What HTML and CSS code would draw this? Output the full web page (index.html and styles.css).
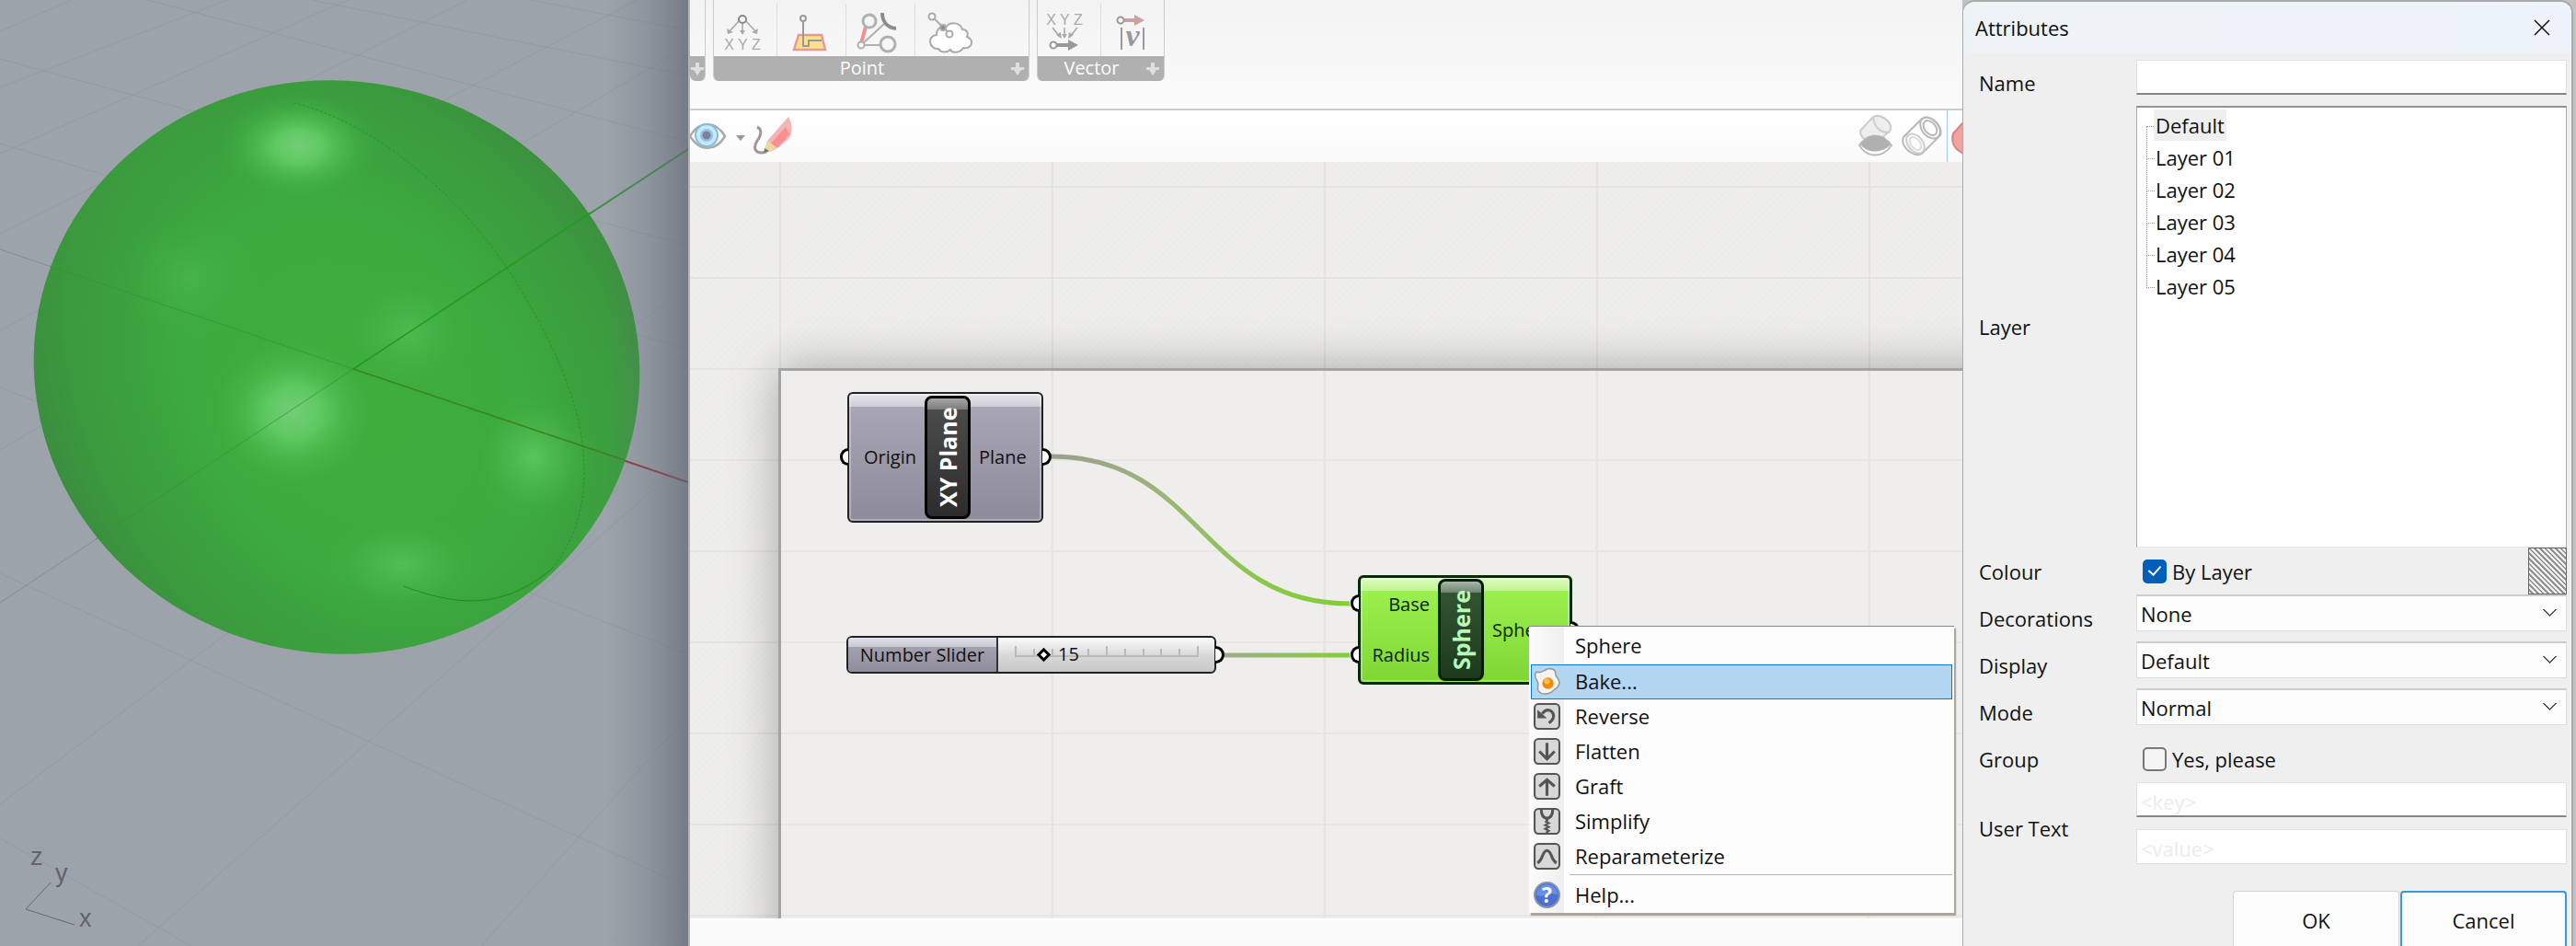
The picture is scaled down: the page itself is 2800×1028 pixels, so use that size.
FILE: index.html
```html
<!DOCTYPE html>
<html lang="en">
<head>
<meta charset="utf-8">
<title>Bake Attributes</title>
<link rel="stylesheet" href="styles.css">
</head>
<body>
<main class="app">
  <section class="viewport" aria-label="Perspective viewport">
    <svg class="scene" viewBox="0 0 748 1028" preserveAspectRatio="xMidYMid slice">
      <defs>
        <radialGradient id="body" gradientUnits="userSpaceOnUse" cx="0" cy="0" r="1" gradientTransform="translate(395 425) rotate(45) scale(500 375)">
          <stop offset="0" stop-color="#3cae3d"/><stop offset=".45" stop-color="#3caa3e"/><stop offset=".75" stop-color="#3b9a3e"/><stop offset="1" stop-color="#3b823f"/>
        </radialGradient>
        <radialGradient id="glow"><stop offset="0" stop-color="#74cc78"/><stop offset=".3" stop-color="#60cb63" stop-opacity=".95"/><stop offset=".65" stop-color="#4cbc4f" stop-opacity=".45"/><stop offset="1" stop-color="#3cae3d" stop-opacity="0"/></radialGradient>
        <radialGradient id="soft"><stop offset="0" stop-color="#58c65b"/><stop offset=".5" stop-color="#4dba50" stop-opacity=".55"/><stop offset="1" stop-color="#3cae3d" stop-opacity="0"/></radialGradient>
      </defs>
      <path class="grid-line" d="M0 64L748 267M0 156L748 380M0 421L748 711M0 623L748 964M0 911L208 1028M160 0L748 154M339 0L748 82M577 0L748 33M0 34L78 0M0 95L247 0M0 167L378 0M0 254L509 0M0 359L693 0M0 489L748 50M0 874L748 311M150 1028L748 498M523 1028L748 777"/>
      <path class="axis-back" d="M0 271L384 401M0 655L384 401"/>
      <path class="axis-y" d="M384 401L748 162"/>
      <path class="axis-x" d="M384 401L748 524"/>
      <ellipse cx="366" cy="399" rx="330" ry="311" transform="rotate(11 366 399)" fill="url(#body)"/>
      <ellipse cx="325" cy="159" rx="88" ry="60" fill="url(#glow)"/>
      <ellipse cx="319" cy="448" rx="96" ry="88" fill="url(#glow)"/>
      <ellipse cx="580" cy="497" rx="66" ry="70" fill="url(#soft)"/>
      <ellipse cx="437" cy="613" rx="84" ry="54" fill="url(#soft)" opacity=".75"/>
      <ellipse cx="443" cy="361" rx="75" ry="68" fill="url(#soft)" opacity=".6"/>
      <ellipse cx="205" cy="303" rx="80" ry="70" fill="url(#soft)" opacity=".35"/>
      <path class="axis-back faint" d="M54 289L384 401M104 586L384 401"/>
      <path d="M384 401L642 231" stroke="#1f9c20" stroke-width="1.5"/>
      <path d="M384 401L679 500" stroke="#41801f" stroke-width="1.5"/>
      <path class="seam" d="M319 112C405 131 505 215 562 308C606 380 636 448 635 516C634 560 622 590 600 618"/>
      <path class="seam strong" d="M600 618C545 664 495 658 439 637"/>
      <path class="gizmo" d="M55 959L28 988L81 1005"/>
      <g class="gizmo-text"><text x="33" y="940">z</text><text x="60" y="958">y</text><text x="86" y="1007">x</text></g>
    </svg>
  </section>

  <section class="editor" aria-label="Definition editor">
    <div class="ribbon">
      <div class="panel panel-cut">
        <div class="tools"></div>
        <div class="panel-title"><svg class="plus" viewBox="0 0 14 14"><path d="M5 0h4v5h5v3h-3l-4 6-4-6H0V5h5z"/></svg></div>
      </div>
      <div class="panel panel-point">
        <div class="tools">
          <button class="tool" aria-label="Deconstruct point"><svg viewBox="0 0 44 44" fill="none" stroke="#aaa" stroke-width="1.6"><path d="M18 10L7 22M22 12V22M26 10L37 22"/><path d="M5 18l1 6 6-2zM19 20l3 5 3-5zM39 18l-1 6-6-2z" fill="#aaa" stroke="none"/><circle cx="22" cy="8" r="4" stroke="#888" stroke-width="2"/><text class="glyph" x="22" y="41" text-anchor="middle">X Y Z</text></svg></button>
          <button class="tool" aria-label="Construct point"><svg viewBox="0 0 44 44" fill="none"><path d="M14 25h25l4 16H9z" fill="#ffe08a" stroke="#e49a96" stroke-width="2.5"/><path d="M19 9V37h6v-6h14" stroke="#999" stroke-width="2"/><circle cx="19" cy="7" r="3" stroke="#999" stroke-width="2"/></svg></button>
          <button class="tool" aria-label="Closest point"><svg viewBox="0 0 44 44" fill="none" stroke="#b0b0b0" stroke-width="2"><path d="M7 36L32 13M7 36H28"/><path d="M7 34L12 16" stroke="#f09090" stroke-width="4"/><circle cx="16" cy="10" r="7" stroke-width="3"/><circle cx="36" cy="35" r="8" stroke-width="3"/><path d="M30 1c0 10 6 16 15 17" stroke="#8c8c8c" stroke-width="4"/><circle cx="7" cy="36" r="3.5" fill="#fff"/></svg></button>
          <button class="tool" aria-label="Point cloud"><svg viewBox="-6 -2 44 44" fill="#fff" stroke="#aaa" stroke-width="2"><path d="M10 38c-10 1-13-14-2-15 0-8 6-10 10-8 4-7 16-6 18 2 5 0 7 4 5 8 9 3 5 14-4 12-4 6-12 6-14 2-4 4-11 3-13-1z"/><path d="M3 3L23 22"/><circle cx="3" cy="3" r="3.500"/><circle cx="15" cy="15" r="3" fill="#888"/><circle cx="22" cy="22" r="3.500"/></svg></button>
        </div>
        <div class="panel-title">Point<svg class="plus" viewBox="0 0 14 14"><path d="M5 0h4v5h5v3h-3l-4 6-4-6H0V5h5z"/></svg></div>
      </div>
      <div class="panel panel-vector">
        <div class="tools">
          <button class="tool" aria-label="Vector XYZ"><svg viewBox="0 0 44 44" fill="none" stroke="#aaa" stroke-width="1.6"><text class="glyph" x="20" y="14" text-anchor="middle">X Y Z</text><path d="M7 17l8 10M20 17v10M34 17l-8 10"/><path d="M11 25l6 4-1-7zM17 24l3 5 3-5zM30 25l-6 4 1-7z" fill="#aaa" stroke="none"/><path d="M11 36H24" stroke="#999" stroke-width="4"/><path d="M24 30l11 6-11 6z" fill="#999" stroke="none"/><circle cx="8" cy="36" r="3.500" stroke="#999" stroke-width="2" fill="#fff"/></svg></button>
          <button class="tool" aria-label="Amplitude"><svg viewBox="-3 -1 44 44" fill="none" stroke="#999" stroke-width="2"><path d="M13 8H24" stroke="#cda0a0" stroke-width="4"/><path d="M24 2l11 6-11 6z" fill="#cda0a0" stroke="none"/><circle cx="9" cy="8" r="3.500" fill="#fff"/><path d="M10 16V40M34 16V40"/><text class="glyph-v" x="22" y="36" text-anchor="middle">v</text></svg></button>
        </div>
        <div class="panel-title">Vector<svg class="plus" viewBox="0 0 14 14"><path d="M5 0h4v5h5v3h-3l-4 6-4-6H0V5h5z"/></svg></div>
      </div>
    </div>

    <div class="toolbar">
      <button class="bar-button" aria-label="Preview"><svg width="40" height="44" viewBox="0 0 40 44"><path d="M0 22C10 5 28 5 38 22C28 39 10 39 0 22z" fill="#fcfcfc" stroke="#aaa" stroke-width="2.500"/><circle cx="18" cy="21" r="12" fill="#c3eafa" stroke="#84bdd8" stroke-width="2"/><circle cx="18" cy="21" r="7" fill="#9bbdeb"/><circle cx="18" cy="21" r="4.500" fill="#7a8498"/></svg></button>
      <button class="bar-button caret" aria-label="Preview options"><svg width="10" height="6" viewBox="0 0 10 6"><path d="M0 0h10L5 6z" fill="#999"/></svg></button>
      <button class="bar-button" aria-label="Sketch"><svg width="44" height="44" viewBox="0 0 44 44"><path d="M5 12C10 14 10 20 5 27C-1 37 5 42 15 39" fill="none" stroke="#a89494" stroke-width="3"/><path d="M12 41L16 27L39 1C44 10 44 20 38 26L24 37z" fill="#f4b5b5"/><path d="M20 30L36 12L40 20L27 35z" fill="#f77" opacity=".6"/><path d="M12 41L16 27L27 35z" fill="#ead9a0"/><path d="M12 41l1-6 5 3z" fill="#777"/></svg></button>
      <div class="bar-right">
        <button class="bar-button" aria-label="No preview"><svg width="38" height="48" viewBox="0 0 38 48"><path d="M2 18L16 3C24-1 37 8 35 17L24 28C14 33 2 28 2 18z" fill="#eee" stroke="#ccc" stroke-width="2"/><path d="M16 3C17 14 24 21 34 20" fill="none" stroke="#ccc" stroke-width="2"/><path d="M1 34C10 20 26 20 36 34C26 48 10 48 1 34z" fill="#fff" stroke="#bbb" stroke-width="2"/><path d="M2 33C12 20 26 20 35 33C26 43 10 43 2 33z" fill="#b0b0b0"/></svg></button>
        <button class="bar-button" aria-label="Wireframe preview"><svg width="46" height="46" viewBox="0 0 46 46" fill="none" stroke="#b8b8b8" stroke-width="2"><path d="M2 24L22 4C30-2 46 12 42 22L22 42C14 47-2 35 2 24z"/><ellipse cx="31" cy="14" rx="9" ry="13" transform="rotate(-40 31 14)"/><ellipse cx="31" cy="14" rx="6" ry="9" transform="rotate(-40 31 14)"/><ellipse cx="15" cy="31" rx="8" ry="12" transform="rotate(-40 15 31)" stroke="#ccc"/><ellipse cx="15" cy="31" rx="5" ry="8" transform="rotate(-40 15 31)" stroke="#ddd"/></svg></button>
        <button class="bar-button selected" aria-label="Shaded preview"><svg width="14" height="46" viewBox="0 0 14 46"><path d="M15 8L4 20Q1 31 9 38L15 42z" fill="#f2a29d" stroke="#c88" stroke-width="2"/></svg></button>
      </div>
    </div>

    <div class="canvas">
      <div class="sheet"></div>
      <svg class="wires" aria-hidden="true">
        <defs>
          <linearGradient id="w1" gradientUnits="userSpaceOnUse" x1="393" y1="320" x2="717" y2="480"><stop offset="0" stop-color="#9a9f8c"/><stop offset=".35" stop-color="#9ab67a"/><stop offset=".7" stop-color="#8ac650"/><stop offset="1" stop-color="#84cf33"/></linearGradient>
          <linearGradient id="w2" gradientUnits="userSpaceOnUse" x1="581" y1="0" x2="717" y2="0"><stop offset="0" stop-color="#9fab8c"/><stop offset="1" stop-color="#84cf33"/></linearGradient>
        </defs>
        <path d="M388 320H393C555 320 555 480 717 480" stroke="url(#w1)"/>
        <path d="M576 536H717" stroke="url(#w2)"/>
      </svg>

      <article class="node node-plane">
        <i class="grip grip-left"></i><i class="grip grip-right"></i>
        <div class="inputs"><span>Origin</span></div>
        <h2 class="node-name">XY Plane</h2>
        <div class="outputs"><span>Plane</span></div>
      </article>

      <article class="node node-sphere">
        <i class="grip grip-left grip-base"></i><i class="grip grip-left grip-radius"></i><i class="grip grip-right"></i>
        <div class="inputs"><span>Base</span><span>Radius</span></div>
        <h2 class="node-name">Sphere</h2>
        <div class="outputs"><span>Sphere</span></div>
      </article>

      <article class="slider">
        <i class="grip grip-right"></i>
        <label class="slider-name" for="radius">Number Slider</label>
        <div class="slider-track">
          <svg class="ticks" viewBox="0 0 200 12"><path d="M1 0V11H199V0M21 3V11M41 3V11M80 3V11M100 0V11M120 3V11M140 3V11M159 3V11M179 3V11"/></svg>
          <input id="radius" type="range" min="0" max="100" value="15">
          <output for="radius">15</output>
        </div>
      </article>

      <ul class="menu" role="menu">
        <li><button role="menuitem"><span class="menu-icon"></span>Sphere</button></li>
        <li class="active"><button role="menuitem"><svg class="menu-icon" viewBox="0 0 28 28"><path d="M3 4c5 2 7-1 11-3 5-1 9 0 9 5 0 4 5 6 4 10-1 5-5 6-8 9-4 3-11 3-14-1-2-3 1-6-1-10-2-3-4-7-1-10z" fill="#f4f4f4" stroke="#999" stroke-width="1.500"/><circle cx="15" cy="16" r="6" fill="#f08a00"/><circle cx="14" cy="14" r="3" fill="#ffc04a"/></svg>Bake...</button></li>
        <li><button role="menuitem"><svg class="menu-icon framed" viewBox="0 0 28 28"><rect x="1" y="1" width="26" height="26" rx="4"/><path d="M9 11Q14 5 19 9Q24 15 16 21" class="thick"/><path d="M4 7V16H14z" class="solid"/></svg>Reverse</button></li>
        <li><button role="menuitem"><svg class="menu-icon framed" viewBox="0 0 28 28"><rect x="1" y="1" width="26" height="26" rx="4"/><path d="M14 5V22M6 14L14 22L22 14" class="thick"/></svg>Flatten</button></li>
        <li><button role="menuitem"><svg class="menu-icon framed" viewBox="0 0 28 28"><rect x="1" y="1" width="26" height="26" rx="4"/><path d="M14 24V7M6 14L14 7L22 14" class="thick"/></svg>Graft</button></li>
        <li><button role="menuitem"><svg class="menu-icon framed" viewBox="0 0 28 28"><rect x="1" y="1" width="26" height="26" rx="4"/><path d="M8 2Q8 10 14 11Q20 10 20 2M14 10V14" class="thick"/><path d="M12 14l4 2-4 2 4 2-4 2 4 2-3 2" class="thin"/></svg>Simplify</button></li>
        <li><button role="menuitem"><svg class="menu-icon framed" viewBox="0 0 28 28"><rect x="1" y="1" width="26" height="26" rx="4"/><path d="M4 21C10 18 9 8 14 8S18 18 24 21" class="thick"/></svg>Reparameterize</button></li>
        <li class="separated"><button role="menuitem"><svg class="menu-icon" viewBox="0 0 28 28"><circle cx="14" cy="14" r="13" fill="#4a70d2" stroke="#8b93ad" stroke-width="2"/><path d="M3 14a11 11 0 0 1 22 0c-7-4-15 4-22 0z" fill="#7fa3ec" opacity=".6"/><text class="help-mark" x="14" y="22" text-anchor="middle">?</text></svg>Help...</button></li>
      </ul>
    </div>
    <footer class="status"></footer>
  </section>

  <aside class="side">
    <form class="dialog" aria-label="Attributes">
      <header class="title-bar"><h1>Attributes</h1><button type="button" class="close" aria-label="Close"><svg width="18" height="18" viewBox="0 0 18 18"><path d="M1 1L17 17M17 1L1 17" stroke="#111" stroke-width="1.500"/></svg></button></header>
      <div class="fields">
        <label for="name">Name</label>
        <input id="name" class="text" type="text">
        <span class="caption" id="layer-label">Layer</span>
        <ul class="tree" role="tree" aria-labelledby="layer-label">
          <li role="treeitem"><span class="current">Default</span></li>
          <li role="treeitem"><span>Layer 01</span></li>
          <li role="treeitem"><span>Layer 02</span></li>
          <li role="treeitem"><span>Layer 03</span></li>
          <li role="treeitem"><span>Layer 04</span></li>
          <li role="treeitem"><span>Layer 05</span></li>
        </ul>
        <span class="caption">Colour</span>
        <div class="check-row"><input id="bylayer" type="checkbox" checked><label for="bylayer">By Layer</label><button type="button" class="swatch" aria-label="Pick colour"></button></div>
        <label for="decor">Decorations</label>
        <select id="decor"><option>None</option></select>
        <label for="display">Display</label>
        <select id="display"><option>Default</option></select>
        <label for="mode">Mode</label>
        <select id="mode"><option>Normal</option></select>
        <span class="caption">Group</span>
        <div class="check-row"><input id="group" type="checkbox"><label for="group">Yes, please</label></div>
        <label for="key">User Text</label>
        <div class="pair"><input id="key" class="text" type="text" placeholder="&lt;key&gt;"><input class="text plain" type="text" placeholder="&lt;value&gt;" aria-label="Value"></div>
      </div>
      <div class="actions"><button type="button">OK</button><button type="button" class="focus">Cancel</button></div>
    </form>
  </aside>
</main>
</body>
</html>
```

FILE: styles.css
```css
* { box-sizing: border-box; }
body { margin: 0; font: 22px/30px "Open Sans", "Noto Sans", sans-serif; color: #111; }
button, input, select, output { font: inherit; color: inherit; }
button { border: 0; padding: 0; background: none; }
h1, h2, ul { margin: 0; padding: 0; font: inherit; list-style: none; }
svg { display: block; }

.app { display: grid; grid-template-columns: 748fr 1385fr 667fr; height: 100vh; overflow: hidden; }

/* 3D viewport */
.viewport { position: relative; background: #9da3ab; overflow: hidden; }
.viewport::after { content: ""; position: absolute; inset: 0 0 0 auto; width: 90px; background: linear-gradient(90deg, rgba(100,108,120,0), rgba(100,108,120,.25) 50%, rgba(95,103,115,.65)); }
.scene { width: 100%; height: 100%; fill: none; }
.grid-line { stroke: #939aa2; stroke-width: 1; }
.axis-back { stroke: #8b8a92; stroke-width: 1; }
.axis-back.faint { stroke: #36903a; opacity: .7; }
.axis-y { stroke: #3f9142; stroke-width: 2; }
.axis-x { stroke: #96393d; stroke-width: 2; }
.seam { stroke: #178f1b; stroke-width: 1; stroke-dasharray: 3 2; opacity: .7; }
.seam.strong { stroke-dasharray: none; opacity: 1; }
.gizmo { stroke: #66686a; stroke-width: 1; }
.gizmo-text { fill: #626466; font: 27px "Liberation Sans", sans-serif; }

/* Definition editor */
.editor { display: flex; flex-direction: column; min-width: 0; border-left: 2px solid #b4b4b4; background: #fafafa; }
.ribbon { display: flex; gap: 8px; height: 118px; background: linear-gradient(#f3f3f3, #fbfbfb); }
.panel { display: flex; flex-direction: column; height: 88px; border-right: 1px solid #ccc; border-left: 1px solid #ccc; border-radius: 0 0 6px 6px; overflow: hidden; }
.panel-cut { width: 17px; border-left: 0; }
.panel-point { width: 344px; }
.panel-vector { width: 139px; }
.tools { display: flex; height: 61px; padding-top: 4px; }
.tool { width: 75px; border-right: 1px solid #ddd; padding: 4px 0 0 9px; }
.panel-vector .tool { width: 69px; }
.tool:first-child { width: 69px; }
.tool:last-child { border: 0; }
.tool svg { width: 44px; height: 44px; overflow: visible; }
.glyph { font: 16px "Liberation Sans", sans-serif; fill: #aaa; stroke: none; }
.glyph-v { font: italic bold 34px "Liberation Serif", serif; fill: #999; stroke: none; }
.panel-title { position: relative; flex: 1; padding-right: 20px; background: #b0b0b0; color: #fff; font-size: 20px; line-height: 25px; text-align: center; }
.plus { position: absolute; right: 5px; top: 7px; width: 14px; height: 14px; fill: #dedede; }
.toolbar { display: flex; align-items: center; height: 58px; border-top: 2px solid #ccc; background: linear-gradient(#fff, #fafafa); }
.caret { margin: 4px 8px 0 10px; }
.bar-right { display: flex; align-items: center; align-self: stretch; gap: 9px; margin-left: auto; }
.selected { align-self: stretch; margin-left: -6px; border-left: 1px solid #9fc8ec; padding-left: 2px; }
.status { height: 30px; border-top: 2px solid #fff; background: #fafafa; }

.canvas { position: relative; flex: 1; overflow: hidden; font-size: 20px;
  background:
    linear-gradient(90deg, #e5e4e2 2px, transparent 2px) 97px 0 / 296px 99px,
    linear-gradient(#e5e4e2 2px, transparent 2px) 0 26px / 296px 99px,
    repeating-linear-gradient(135deg, #efeeec 0 3px, #ececea 3px 5px); }
.sheet { position: absolute; inset: 224px -60px -60px 96px; border: 3px solid #a3a3a3; box-shadow: 0 0 50px rgba(0,0,0,.3);
  background:
    linear-gradient(90deg, #e7e6e4 3px, transparent 3px) -3px 0 / 296px 99px,
    linear-gradient(#e7e6e4 2px, transparent 2px) 0 -3px / 296px 99px, #efeeec; }
.wires { position: absolute; inset: 0; width: 100%; height: 100%; fill: none; stroke-width: 5; }

.node { position: absolute; display: flex; padding: 2px 4px; border: 2px solid #222; border-radius: 6px; }
.node-plane { left: 171px; top: 250px; width: 213px; height: 142px; background: linear-gradient(#e6e6ec, #cdcdd5 14px, #a8a6b4 14px, #8d8b99); box-shadow: inset 0 0 0 2px rgba(255,255,255,.3); }
.node-sphere { left: 726px; top: 449px; width: 233px; height: 119px; padding: 1px 3px; border: 3px solid #032e05; background: linear-gradient(#dcfbc0, #c0f593 14px, #9bf04e 14px, #80d634); box-shadow: inset 0 0 0 2px rgba(255,255,255,.3); color: #082408; }
.inputs, .outputs { display: flex; flex-direction: column; justify-content: space-around; }
.inputs { flex: none; width: 78px; padding-right: 9px; text-align: right; }
.node-sphere .inputs { width: 81px; }
.outputs { flex: 1; padding-left: 9px; }
.node-name { display: flex; align-items: center; justify-content: center; flex: none; width: 50px; border: 3px solid #000; border-radius: 8px; writing-mode: vertical-rl; transform: rotate(180deg); background: linear-gradient(0deg, #a6a6a6, #7c7c7c 12px, #4b4b4b 12px, #2c2c2c); color: #fff; font-size: 25px; font-weight: 700; }
.node-sphere .node-name { border-color: #031f05; background: linear-gradient(0deg, #a8b5a8, #6e856e 12px, #325433 12px, #1c3b1c); color: #b9fbb4; }
.grip { position: absolute; width: 9px; height: 19px; top: 59px; border: 3px solid #000; background: #fff; }
.grip-left { left: -10px; border-right: 0; border-radius: 10px 0 0 10px; }
.grip-right { right: -11px; width: 10px; border-left: 0; border-radius: 0 10px 10px 0; }
.node-sphere .grip { top: 47px; }
.node-sphere .grip-left { left: -11px; }
.node-sphere .grip-base { top: 18px; }
.node-sphere .grip-radius { top: 74px; }

.slider { position: absolute; left: 170px; top: 515px; display: flex; width: 402px; height: 41px; border: 2px solid #222; border-radius: 6px; background: linear-gradient(#fcfcfc, #d9d9d9 50%, #c8c8c8); }
.slider .grip { top: 9px; }
.slider-name { width: 163px; border-right: 2px solid #333; border-radius: 4px 0 0 4px; background: linear-gradient(#e0e0e8, #c8c8d0 10px, #a3a1b0 10px, #8f8d9b); line-height: 37px; text-align: center; }
.slider-track { position: relative; flex: 1; }
.ticks { position: absolute; left: 18px; top: 9px; width: 200px; height: 12px; fill: none; stroke: #bababa; stroke-width: 2; }
.slider-track input { position: absolute; left: 14px; top: 8px; width: 208px; height: 21px; margin: 0; appearance: none; background: none; }
.slider-track input::-webkit-slider-thumb { appearance: none; width: 11px; height: 11px; border: 3px solid #000; background: #fff; transform: rotate(45deg); }
.slider-track output { position: absolute; left: 64px; top: 3px; padding: 0 1px; }

.menu { position: absolute; left: 912px; top: 504px; width: 462px; padding: 2px 2px 0; border-top: 1px solid #888; background: linear-gradient(90deg, #fcfcfc, #efefef 38px, #fdfdfd 38px); box-shadow: 2px 3px 1px #aaa6a2; font-size: 22px; }
.menu button { display: flex; align-items: center; gap: 16px; width: 100%; height: 38px; padding: 0 2px 2px; border: 1px solid transparent; }
.menu li:first-child { height: 39px; }
.menu .active button { border-color: #0078d7; background: #b3d6f2; }
.menu-icon { width: 29px; height: 29px; }
.framed { fill: none; stroke: #555; stroke-width: 2; }
.framed rect { fill: #d8d8d8; }
.framed .thick { stroke-width: 3; }
.framed .solid { fill: #555; stroke: none; }
.help-mark { font: bold 22px "Open Sans", sans-serif; fill: #fff; }
.separated { border-top: 1px solid #b5b5b5; border-image: linear-gradient(90deg, transparent 43px, #b5b5b5 43px) 1; padding-top: 3px; }

/* Attributes dialog */
.side { background: #c2c2c2; }
.dialog { display: flex; flex-direction: column; height: 100vh; margin-right: 3px; border: 2px solid #a9a9a9; border-width: 2px 2px 0 1px; border-radius: 14px 14px 0 0; background: #efefef; overflow: hidden; }
.title-bar { display: flex; align-items: center; justify-content: space-between; flex: none; height: 56px; padding: 0 23px 0 13px; background: linear-gradient(90deg, #edf3f5, #eef3fb); }
.fields { display: grid; grid-template-columns: 171px 1fr; grid-template-rows: 50px 480px repeat(5, 51px) 100px; padding: 7px 5px 0 17px; }
.fields > label, .caption { align-self: center; }
.text { display: block; width: 100%; height: 38px; border: 1px solid #e3e3e3; border-bottom: 2px solid #858585; padding: 4px 4px 0; background: #fff; }
.text.plain { border-bottom: 1px solid #ddd; }
.text::placeholder { color: #eeecea; opacity: 1; }
.tree { border: 1px solid #a5a9ad; border-top: 2px solid #8f959c; border-bottom-color: #e5e5e5; padding: 2px 0 0 10px; background: #fff; }
.tree li { position: relative; height: 35px; padding-left: 8px; }
.tree li::before { content: ""; position: absolute; left: 0; top: -17px; width: 8px; height: 35px; border: 1px dotted #999; border-width: 0 0 1px 1px; }
.tree li:first-child::before { top: 17px; height: 1px; border-left: 0; }
.tree span { display: inline-block; padding: 0 2px; line-height: 34px; }
.tree .current { background: #efefef; }
.check-row { display: flex; align-items: center; gap: 6px; padding-left: 7px; }
.check-row input { appearance: none; width: 26px; height: 26px; margin: 0; border: 2px solid #777; border-radius: 5px; background: #f5f5f5; }
.check-row input:checked { border-color: #005fb8; background: #005fb8; display: grid; place-items: center; }
.check-row input:checked::after { content: ""; width: 6px; height: 11px; margin-top: -4px; border: solid #fff; border-width: 0 2px 2px 0; rotate: 42deg; }
.swatch { align-self: stretch; width: 42px; margin-left: auto; border: 1px solid #666; background: repeating-linear-gradient(45deg, #f0f0f0 0 2px, #929292 2px 4px); }
select { appearance: none; height: 40px; padding: 0 4px; border: 1px solid #ddd; border-top: 2px solid #ccc; border-radius: 0;
  background-color: #fdfdfd;
  background-image: linear-gradient(45deg, transparent 45%, #555 45% 60%, transparent 60%), linear-gradient(-45deg, transparent 45%, #555 45% 60%, transparent 60%);
  background-size: 8px 8px; background-position: right 17px top 14px, right 10px top 14px; background-repeat: no-repeat; }
.pair { display: grid; grid-template-rows: 38px 38px; gap: 13px; }
.actions { display: flex; flex: 1; gap: 1px; justify-content: flex-end; padding: 18px 5px 0 0; }
.actions button { width: 181px; padding-top: 2px; border: 1px solid #d3d3d3; border-bottom: 0; border-radius: 4px 4px 0 0; background: #fdfdfd; }
.actions .focus { border: 2px solid #3d95db; border-bottom: 0; }
```
